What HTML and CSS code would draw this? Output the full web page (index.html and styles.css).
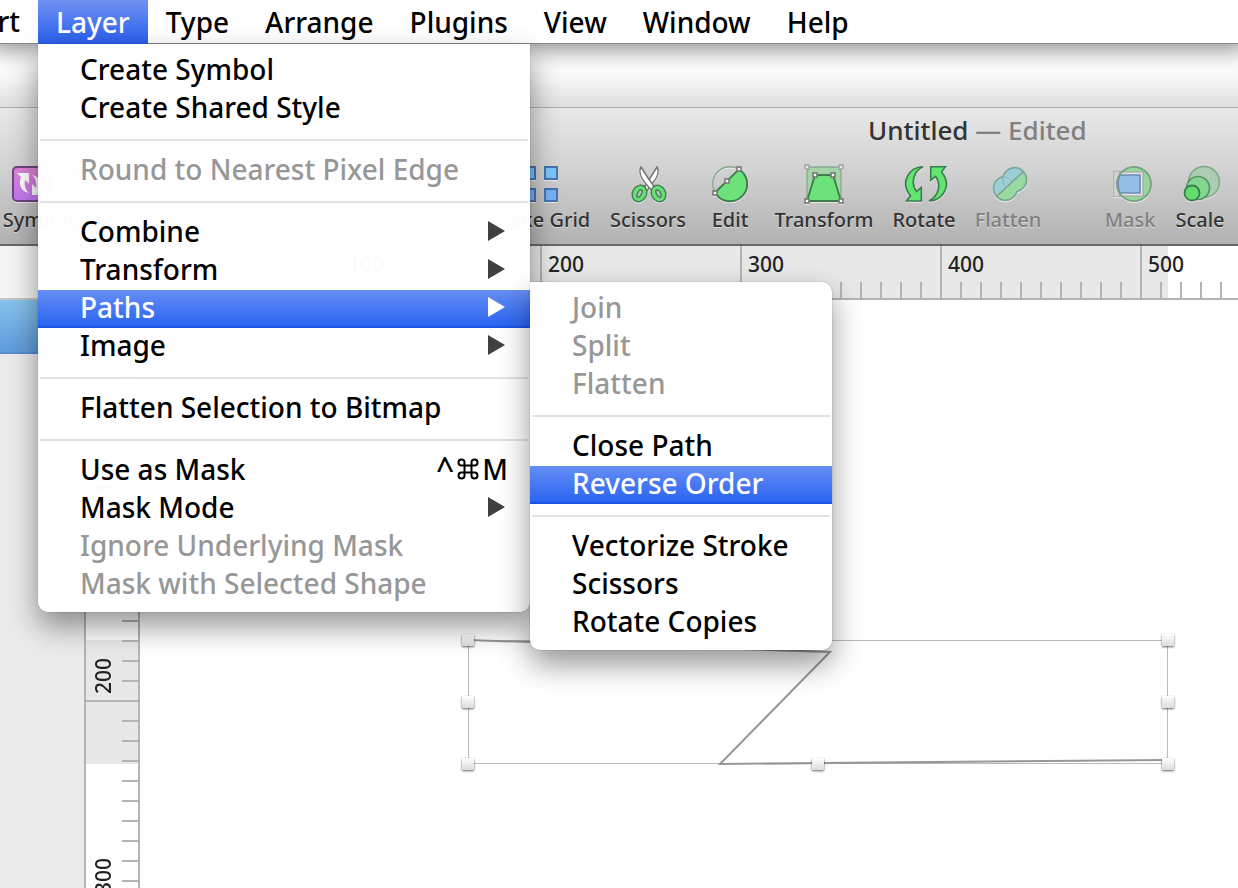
FILE: index.html
```html
<!DOCTYPE html>
<html lang="en">
<head>
<meta charset="utf-8">
<title>Untitled — Edited</title>
<link rel="stylesheet" href="styles.css">
</head>
<body>
<nav class="menubar" aria-label="Application menu">
  <button class="menubar-item menubar-item-cut" type="button">Insert</button>
  <button class="menubar-item is-open" type="button" aria-expanded="true">Layer</button>
  <button class="menubar-item" type="button">Type</button>
  <button class="menubar-item" type="button">Arrange</button>
  <button class="menubar-item" type="button">Plugins</button>
  <button class="menubar-item" type="button">View</button>
  <button class="menubar-item" type="button">Window</button>
  <button class="menubar-item" type="button">Help</button>
</nav>

<div class="backdrop"></div>

<main class="window">
  <header class="chrome">
    <h1 class="title">Untitled <span class="title-state">— Edited</span></h1>
    <div class="toolbar" role="toolbar" aria-label="Tools">
      <button class="tool tool-symbol" type="button">
        <svg class="tool-icon tool-icon-drop" viewBox="0 0 52 44" aria-hidden="true">
          <defs><linearGradient id="purple" x2="0" y2="1"><stop stop-color="#e283d6"/><stop offset="1" stop-color="#c07af2"/></linearGradient></defs>
          <rect x="1" y="5" width="36" height="34" rx="4" fill="url(#purple)" stroke="#6f4480" stroke-width="2"/>
          <path d="M5 11H17V22L13 18C12 24 14 29 17 31C9 30 6 22 9 15ZM32 33H20V22L24 26C25 20 23 15 20 13C28 14 31 22 28 29Z" fill="#fff"/>
        </svg>
        <span>Symbol</span>
      </button>
      <button class="tool tool-grid" type="button">
        <svg class="tool-icon" viewBox="0 0 44 44" aria-hidden="true">
          <g fill="#79c6fb" stroke="#4674b0" stroke-width="2"><rect x="4" y="5" width="12" height="12"/><rect x="26" y="5" width="12" height="12"/><rect x="4" y="27" width="12" height="12" fill="#77b1f8"/><rect x="26" y="27" width="12" height="12" fill="#77b1f8"/></g>
        </svg>
        <span>Make Grid</span>
      </button>
      <button class="tool tool-scissors" type="button">
        <svg class="tool-icon" viewBox="0 0 44 44" aria-hidden="true">
          <path d="M31 5C34 10 31 16 26 22L20 30 17 27C23 18 28 10 31 5Z" fill="#fff" stroke="#777" stroke-width="1.5"/>
          <path d="M15 5C12 10 15 16 20 22L27 30 30 27C23 18 18 10 15 5Z" fill="#fff" stroke="#777" stroke-width="1.5"/>
          <g stroke="#418554" stroke-width="1.5" fill="#69df75"><ellipse cx="13.5" cy="31.5" rx="7" ry="8.5" transform="rotate(28 13.5 31.5)"/><ellipse cx="32.5" cy="31.5" rx="7" ry="8.5" transform="rotate(-28 32.5 31.5)"/></g>
          <g stroke="#418554" stroke-width="1.5" fill="#b9c4bb"><ellipse cx="13.5" cy="31.5" rx="2" ry="4" transform="rotate(28 13.5 31.5)"/><ellipse cx="32.5" cy="31.5" rx="2" ry="4" transform="rotate(-28 32.5 31.5)"/></g>
        </svg>
        <span>Scissors</span>
      </button>
      <button class="tool tool-edit" type="button">
        <svg class="tool-icon" viewBox="0 0 44 44" aria-hidden="true">
          <circle cx="22" cy="22" r="17.2" fill="none" stroke="#84a68c" stroke-width="1.5"/>
          <path d="M7 30.5 31 7.4A17.2 17.2 0 1 1 7 30.5Z" fill="#6ee27a" stroke="#3a7c4c" stroke-width="1.8"/>
          <g fill="#fff" stroke="#777" stroke-width="1.6"><rect x="5" y="29" width="4" height="4"/><rect x="17" y="17" width="4" height="4"/><rect x="29" y="5" width="4" height="4"/></g>
        </svg>
        <span>Edit</span>
      </button>
      <button class="tool tool-transform" type="button">
        <svg class="tool-icon" viewBox="0 0 44 44" aria-hidden="true">
          <rect x="5" y="5" width="34" height="34" fill="#a5d3a9" stroke="#8bab90" stroke-width="1.5"/>
          <path d="M5 39 13 13H31L39 39Z" fill="#6ee27a" stroke="#3a7c4c" stroke-width="1.8"/>
          <g fill="#e4e4e4" stroke="#a4a4a4" stroke-width="1.6"><rect x="3" y="3" width="4" height="4"/><rect x="37" y="3" width="4" height="4"/></g>
          <g fill="#fff" stroke="#777" stroke-width="1.6"><rect x="3" y="37" width="4" height="4"/><rect x="37" y="37" width="4" height="4"/><rect x="11" y="11" width="4" height="4"/><rect x="29" y="11" width="4" height="4"/></g>
        </svg>
        <span>Transform</span>
      </button>
      <button class="tool tool-rotate" type="button">
        <svg class="tool-icon tool-icon-wide" viewBox="0 0 48 44" aria-hidden="true">
          <g fill="#62e571" stroke="#3a7c4c" stroke-width="1.6">
            <path d="M23 4.8C10 5 -1 20 10.500 33.800L6.500 39H21.300V25.500L16.500 29.500C10 21 14 9 23 4.800Z"/>
            <path d="M29 39C42 38.800 53 23.800 41.500 10L45.500 4.800H30.700V18.300L35.500 14.300C42 22.800 38 34.800 29 39Z"/>
          </g>
        </svg>
        <span>Rotate</span>
      </button>
      <button class="tool tool-flatten" type="button" disabled>
        <svg class="tool-icon" viewBox="0 0 44 44" aria-hidden="true">
          <path d="M10 35A12 12 0 0 1 17 14.500A12 12 0 0 1 38 9Z" fill="#9ccfd5"/>
          <path d="M10 35A12 12 0 0 0 31 29.500A12 12 0 0 0 38 9Z" fill="#98d9a0"/>
          <path d="M17 14.500A12 12 0 1 1 31 29.500A12 12 0 1 1 17 14.500ZM10 35 38 9" fill="none" stroke="#7ba393" stroke-width="1.500"/>
          <path d="M17 14.500A12 12 0 0 0 21 26M17 14.500A12 12 0 0 1 26 20" fill="none" stroke="#84b5bb"/>
        </svg>
        <span>Flatten</span>
      </button>
      <button class="tool tool-mask" type="button" disabled>
        <svg class="tool-icon" viewBox="0 0 44 44" aria-hidden="true">
          <rect x="5.500" y="9.500" width="29" height="25" fill="#d4d4d4" stroke="#b5b5b5" stroke-width="1.500"/>
          <circle cx="26" cy="22" r="17" fill="#98d6a0" stroke="#78a581" stroke-width="1.600"/>
          <path d="M12 10H35V34H12Q6 22 12 10Z" fill="#e6e6e6" stroke="#a398a8"/>
          <path d="M12 13H32V31H12Q8 22 12 13Z" fill="#94bfe8" stroke="#6c8db7" stroke-width="1.600"/>
          <circle cx="26" cy="22" r="17" fill="none" stroke="#78a581" stroke-width="1.600"/>
        </svg>
        <span>Mask</span>
      </button>
      <button class="tool tool-scale" type="button">
        <svg class="tool-icon" viewBox="0 0 44 44" aria-hidden="true">
          <circle cx="26" cy="20" r="15.500" fill="#a9cdae" stroke="#7fa888" stroke-width="1.600"/>
          <circle cx="20" cy="26" r="11.500" fill="#83d68d" stroke="#57906a" stroke-width="1.600"/>
          <circle cx="14" cy="31" r="7.500" fill="#63dc70" stroke="#3a7c4c" stroke-width="1.800"/>
        </svg>
        <span>Scale</span>
      </button>
    </div>
  </header>

  <div class="workspace">
    <aside class="sidebar">
      <div class="sidebar-head"></div>
      <div class="sidebar-row"></div>
    </aside>
    <div class="ruler-corner"></div>
    <div class="ruler-h">
      <span>100</span><span>200</span><span>300</span><span>400</span><span>500</span>
    </div>
    <div class="ruler-v">
      <span>100</span><span>200</span><span>300</span>
    </div>
    <section class="canvas">
      <svg class="artwork" width="1098" height="588" viewBox="0 0 1098 588" role="img" aria-label="Selected path">
        <defs>
          <linearGradient id="knob" x2="0" y2="1"><stop stop-color="#fff"/><stop offset="1" stop-color="#dcdcdc"/></linearGradient>
          <filter id="lift" x="-50%" y="-50%" width="200%" height="200%"><feDropShadow dx="0" dy="1" stdDeviation="1.200" flood-opacity=".6"/></filter>
        </defs>
        <path d="M328.500 340.500H1027.500V463.500H328.500Z" fill="none" stroke="#bbb"/>
        <path d="M328 340 690 352 580 464 1028 460" fill="none" stroke="#979797" stroke-width="2"/>
        <g fill="url(#knob)" filter="url(#lift)">
          <rect x="322" y="334" width="12" height="12"/><rect x="672" y="334" width="12" height="12"/><rect x="1022" y="334" width="12" height="12"/>
          <rect x="322" y="396" width="12" height="12"/><rect x="1022" y="396" width="12" height="12"/>
          <rect x="322" y="458" width="12" height="12"/><rect x="672" y="458" width="12" height="12"/><rect x="1022" y="458" width="12" height="12"/>
        </g>
      </svg>
    </section>
  </div>
</main>

<div class="menu menu-layer" role="menu" aria-label="Layer">
  <button class="menu-item" role="menuitem" type="button">Create Symbol</button>
  <button class="menu-item" role="menuitem" type="button">Create Shared Style</button>
  <hr class="menu-rule">
  <button class="menu-item" role="menuitem" type="button" disabled>Round to Nearest Pixel Edge</button>
  <hr class="menu-rule">
  <button class="menu-item has-submenu" role="menuitem" type="button">Combine</button>
  <button class="menu-item has-submenu" role="menuitem" type="button">Transform</button>
  <button class="menu-item has-submenu is-active" role="menuitem" type="button">Paths</button>
  <button class="menu-item has-submenu" role="menuitem" type="button">Image</button>
  <hr class="menu-rule">
  <button class="menu-item" role="menuitem" type="button">Flatten Selection to Bitmap</button>
  <hr class="menu-rule">
  <button class="menu-item" role="menuitem" type="button">Use as Mask <span class="shortcut"><span class="shortcut-ctrl">^</span><svg class="shortcut-cmd" viewBox="0 0 22 22" role="img" aria-label="Command"><path d="M7.500 7.500V4.500A3 3 0 1 0 4.500 7.500H17.500A3 3 0 1 0 14.500 4.500V17.500A3 3 0 1 0 17.500 14.500H4.500A3 3 0 1 0 7.500 17.500Z" fill="none" stroke="#000" stroke-width="2"/></svg>M</span></button>
  <button class="menu-item has-submenu" role="menuitem" type="button">Mask Mode</button>
  <button class="menu-item" role="menuitem" type="button" disabled>Ignore Underlying Mask</button>
  <button class="menu-item" role="menuitem" type="button" disabled>Mask with Selected Shape</button>
</div>

<div class="menu menu-paths" role="menu" aria-label="Paths">
  <button class="menu-item" role="menuitem" type="button" disabled>Join</button>
  <button class="menu-item" role="menuitem" type="button" disabled>Split</button>
  <button class="menu-item" role="menuitem" type="button" disabled>Flatten</button>
  <hr class="menu-rule">
  <button class="menu-item" role="menuitem" type="button">Close Path</button>
  <button class="menu-item is-active" role="menuitem" type="button">Reverse Order</button>
  <hr class="menu-rule">
  <button class="menu-item" role="menuitem" type="button">Vectorize Stroke</button>
  <button class="menu-item" role="menuitem" type="button">Scissors</button>
  <button class="menu-item" role="menuitem" type="button">Rotate Copies</button>
</div>
</body>
</html>
```
FILE: styles.css
```css
* { box-sizing: border-box; }

body {
  margin: 0;
  height: 100vh;
  display: flex;
  flex-direction: column;
  overflow: hidden;
  background: #fff;
  color: #000;
  font-family: "Lucida Grande", "Noto Sans", sans-serif;
  font-weight: 500;
}

button {
  margin: 0;
  padding: 0;
  border: 0;
  background: none;
  color: inherit;
  font: inherit;
}

/* Menu bar */
.menubar {
  position: relative;
  z-index: 3;
  flex: none;
  display: flex;
  height: 44px;
  background: #fff;
  border-bottom: 1px solid #868986;
  box-shadow: 0 -6px 26px 10px rgba(0, 0, 0, .5);
  font-size: 28px;
}
.menubar-item {
  flex: none;
  height: 43px;
  padding: 0 18px;
  line-height: 42px;
}
.menubar-item-cut {
  display: flex;
  justify-content: flex-end;
  width: 38px;
}
.menubar-item.is-open {
  height: 44px;
  color: #fff;
  background: linear-gradient(#6f92f3, #2a5eec);
}

.backdrop {
  flex: none;
  height: 63px;
  background: linear-gradient(#fff 40%, #dedede);
}

/* Window chrome */
.window {
  flex: 1;
  min-height: 0;
  display: flex;
  flex-direction: column;
}
.chrome {
  flex: none;
  border-top: 1px solid #b0b0b0;
  border-bottom: 2px solid #686868;
  background: linear-gradient(#e8e8e8, #d2d2d2 45%, #b2b2b2);
}
.title {
  margin: 0;
  padding: 6px 0 0 868px;
  font-size: 26px;
  font-weight: 500;
  line-height: 32px;
  color: #333;
  white-space: nowrap;
}
.title-state { color: #808080; }
.toolbar { display: flex; padding-top: 16px; height: 98px; }
.tool {
  flex: none;
  display: flex;
  flex-direction: column;
  align-items: center;
  font-size: 20px;
  line-height: 28px;
  color: #333;
  white-space: nowrap;
  text-shadow: 0 1px 0 rgba(255, 255, 255, .5);
}
.tool:disabled { color: #808080; }
.tool-icon { width: 44px; height: 44px; flex: none; filter: drop-shadow(0 1px 0 rgba(255, 255, 255, .6)); }
.tool-icon-wide { width: 48px; }
.tool-icon-drop { width: 52px; }
.tool-symbol { width: 76px; }
.tool-grid { width: 118px; margin-left: 406px; }
.tool-scissors { width: 96px; }
.tool-edit { width: 68px; }
.tool-transform { width: 120px; }
.tool-rotate { width: 80px; }
.tool-flatten { width: 88px; }
.tool-mask { width: 84px; margin-left: 36px; }
.tool-scale { width: 56px; }

/* Workspace */
.workspace {
  flex: 1;
  min-height: 0;
  display: grid;
  grid-template-columns: 84px 56px 1fr;
  grid-template-rows: 54px 1fr;
}
.sidebar { grid-row: 1 / 3; background: #ebebeb; }
.sidebar-head { height: 54px; background: #f5f5f5; border-bottom: 2px solid #c6c6c6; }
.sidebar-row {
  height: 54px;
  background: linear-gradient(#88c3ec, #5e9bdb);
  border-bottom: 2px solid #5590cf;
}
.ruler-corner {
  background: #f5f5f5;
  border: solid #b4b4b4;
  border-width: 0 0 2px 2px;
}
.ruler-h {
  display: flex;
  overflow: hidden;
  padding-left: 200px;
  border-bottom: 2px solid #b4b4b4;
  background:
    repeating-linear-gradient(90deg, #b4b4b4 0 2px, transparent 2px 200px),
    repeating-linear-gradient(90deg, #b4b4b4 0 2px, transparent 2px 20px) 0 36px / 100% 16px no-repeat,
    linear-gradient(90deg, #fff 328px, #e8e8e8 328px 1028px, #fff 1028px);
}
.ruler-h span, .ruler-v span {
  flex: none;
  font-size: 21px;
  color: #222;
}
.ruler-h span { width: 200px; padding-left: 8px; line-height: 36px; }
.ruler-v {
  overflow: hidden;
  border: solid #b4b4b4;
  border-width: 0 2px;
  background:
    repeating-linear-gradient(#b4b4b4 0 2px, transparent 2px 200px),
    repeating-linear-gradient(#b4b4b4 0 2px, transparent 2px 20px) 36px 0 / 16px 100% no-repeat,
    linear-gradient(#fff 340px, #e8e8e8 340px 464px, #fff 464px);
}
.ruler-v span {
  display: block;
  height: 200px;
  padding-top: 6px;
  line-height: 34px;
  writing-mode: vertical-rl;
  transform: rotate(180deg);
}
.canvas { overflow: hidden; background: #fff; }
.artwork { display: block; }

/* Drop-down menus */
.menu {
  position: absolute;
  padding: 8px 0;
  background: rgba(255, 255, 255, .98);
  box-shadow: 0 0 1px rgba(0, 0, 0, .6), 0 14px 30px rgba(0, 0, 0, .42);
  font-size: 28px;
}
.menu-layer { z-index: 4; top: 44px; left: 38px; width: 492px; border-radius: 0 0 10px 10px; }
.menu-paths { z-index: 5; top: 282px; left: 530px; width: 302px; border-radius: 0 10px 10px 10px; }
.menu-item {
  display: flex;
  align-items: center;
  justify-content: space-between;
  width: 100%;
  height: 38px;
  padding: 0 22px 4px 42px;
  line-height: 34px;
  text-align: left;
  white-space: nowrap;
}
.menu-item:disabled { color: #979797; }
.menu-item.is-active {
  color: #fff;
  background: linear-gradient(#668df4, #2662f1);
  box-shadow: inset 0 -2px #1955e3;
}
.has-submenu::after {
  content: "";
  margin-right: 3px;
  border: solid transparent;
  border-width: 10px 0 10px 17px;
  border-left-color: #404040;
}
.has-submenu.is-active::after { border-left-color: #fff; }
.menu-rule {
  height: 2px;
  margin: 11px 2px;
  border: 0;
  background: #e2e2e2;
}
.shortcut { display: flex; align-items: center; gap: 3px; }
.shortcut-ctrl { font-size: 32px; }
.shortcut-cmd { width: 22px; height: 22px; }
```
